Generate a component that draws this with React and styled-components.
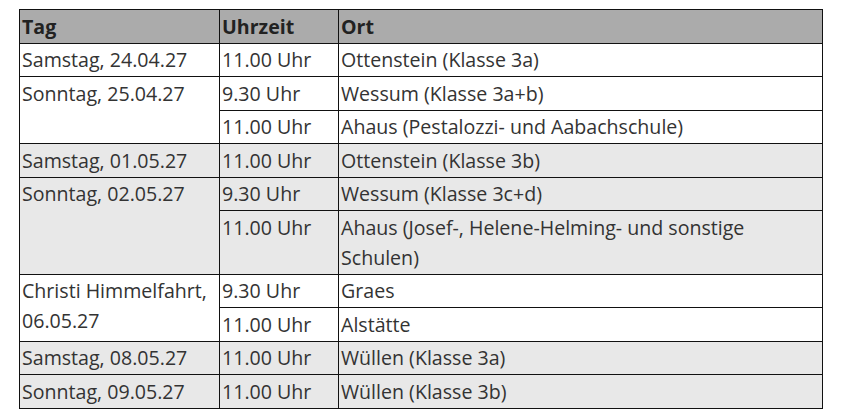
import React from "react";
import styled, { createGlobalStyle } from "styled-components";

const GlobalStyle = createGlobalStyle`
  body {
    margin: 0;
    background: #fff;
    font-family: "Open Sans", "Noto Sans", sans-serif;
  }
`;

const Page = styled.div`
  padding: 9px 0 0 19px;
`;

const Table = styled.table`
  width: 804px;
  border-collapse: collapse;
  border: 1px solid #111;
  font-size: 19.6px;
  line-height: 30px;
  color: #333;
  table-layout: fixed;
`;

const HeadCell = styled.th`
  background: #ababab;
  color: #222;
  font-weight: 700;
  text-align: left;
  padding: 1.5px 2px 1px;
  border: 1px solid #111;
  white-space: nowrap;
`;

const Cell = styled.td`
  background: ${(p) => (p.$shade ? "#e8e8e8" : "#fff")};
  vertical-align: top;
  padding: 1.5px 2px 1px;
  border: 1px solid #111;
`;

const schedule = [
  { day: "Samstag, 24.04.27", shade: false, slots: [["11.00 Uhr", "Ottenstein (Klasse 3a)"]] },
  {
    day: "Sonntag, 25.04.27",
    shade: false,
    slots: [
      ["9.30 Uhr", "Wessum (Klasse 3a+b)"],
      ["11.00 Uhr", "Ahaus (Pestalozzi- und Aabachschule)"],
    ],
  },
  { day: "Samstag, 01.05.27", shade: true, slots: [["11.00 Uhr", "Ottenstein (Klasse 3b)"]] },
  {
    day: "Sonntag, 02.05.27",
    shade: true,
    slots: [
      ["9.30 Uhr", "Wessum (Klasse 3c+d)"],
      ["11.00 Uhr", "Ahaus (Josef-, Helene-Helming- und sonstige Schulen)"],
    ],
  },
  {
    day: "Christi Himmelfahrt, 06.05.27",
    shade: false,
    slots: [
      ["9.30 Uhr", "Graes"],
      ["11.00 Uhr", "Alstätte"],
    ],
  },
  { day: "Samstag, 08.05.27", shade: true, slots: [["11.00 Uhr", "Wüllen (Klasse 3a)"]] },
  { day: "Sonntag, 09.05.27", shade: true, slots: [["11.00 Uhr", "Wüllen (Klasse 3b)"]] },
];

const App = () => {
  return (
    <Page>
      <GlobalStyle />
      <Table>
        <colgroup>
          <col style={{ width: "200px" }} />
          <col style={{ width: "119px" }} />
          <col />
        </colgroup>
        <thead>
          <tr>
            <HeadCell>Tag</HeadCell>
            <HeadCell>Uhrzeit</HeadCell>
            <HeadCell>Ort</HeadCell>
          </tr>
        </thead>
        <tbody>
          {schedule.map((group, gi) =>
            group.slots.map(([time, place], si) => (
              <tr key={`${gi}-${si}`}>
                {si === 0 && (
                  <Cell $shade={group.shade} rowSpan={group.slots.length}>
                    {group.day}
                  </Cell>
                )}
                <Cell $shade={group.shade}>{time}</Cell>
                <Cell $shade={group.shade}>{place}</Cell>
              </tr>
            ))
          )}
        </tbody>
      </Table>
    </Page>
  );
};

export default App;
